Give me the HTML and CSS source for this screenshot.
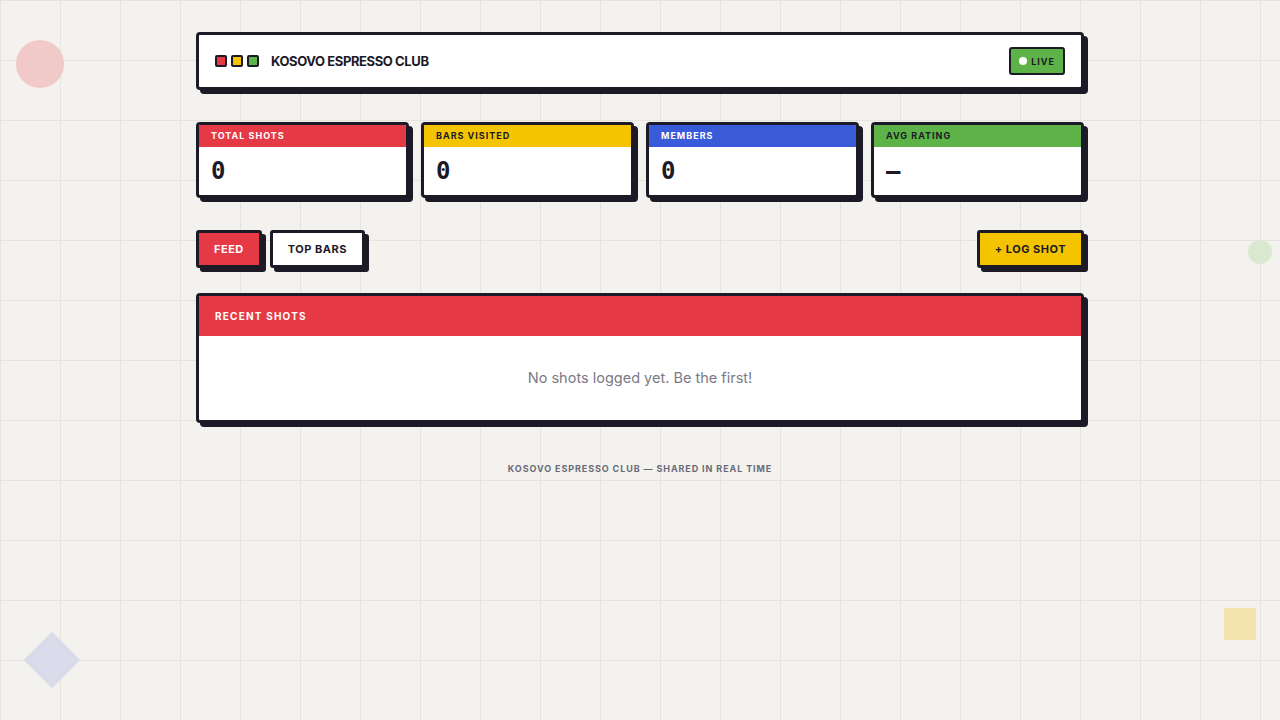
FILE: index.html
```html
<!DOCTYPE html>
<html lang="en">
<head>
    <meta charset="UTF-8">
    <meta name="viewport" content="width=device-width, initial-scale=1.0">
    <title>Kosovo Espresso Club</title>
    <link rel="stylesheet" href="styles.css">
</head>
<body>

    <div class="deco deco-circle-red"></div>
    <div class="deco deco-circle-green"></div>
    <div class="deco deco-square-yellow"></div>
    <div class="deco deco-diamond"></div>

    <div class="page">
        <header class="topbar">
            <div class="brand">
                <span class="dot red"></span>
                <span class="dot yellow"></span>
                <span class="dot green"></span>
                <span class="brand-name">KOSOVO ESPRESSO CLUB</span>
            </div>
            <div class="live-badge"><span class="live-dot"></span>LIVE</div>
        </header>

        <section class="stats">
            <div class="stat">
                <div class="stat-label red">TOTAL SHOTS</div>
                <div class="stat-value">0</div>
            </div>
            <div class="stat">
                <div class="stat-label yellow">BARS VISITED</div>
                <div class="stat-value">0</div>
            </div>
            <div class="stat">
                <div class="stat-label blue">MEMBERS</div>
                <div class="stat-value">0</div>
            </div>
            <div class="stat">
                <div class="stat-label green">AVG RATING</div>
                <div class="stat-value">—</div>
            </div>
        </section>

        <nav class="actions">
            <div class="tabs">
                <button class="btn btn-active">FEED</button>
                <button class="btn">TOP BARS</button>
            </div>
            <button class="btn btn-log">+ LOG SHOT</button>
        </nav>

        <section class="panel">
            <div class="panel-head">RECENT SHOTS</div>
            <div class="panel-body">No shots logged yet. Be the first!</div>
        </section>

        <footer class="footer">KOSOVO ESPRESSO CLUB — SHARED IN REAL TIME</footer>
    </div>

</body>
</html>
```

FILE: styles.css
```css
body {
    margin: 0;
    min-height: 720px;
    font-family: Inter, "Liberation Sans", sans-serif;
    color: #1c1a27;
    background-color: #f3f2ee;
    background-image:
        linear-gradient(#e6e4de 1px, transparent 1px),
        linear-gradient(90deg, #e6e4de 1px, transparent 1px);
    background-size: 60px 60px;
    overflow: hidden;
}

.page {
    width: 888px;
    margin: 0 auto;
    padding-top: 32px;
    position: relative;
}

/* decorations */
.deco {
    position: absolute;
}
.deco-circle-red {
    left: 16px;
    top: 40px;
    width: 48px;
    height: 48px;
    border-radius: 50%;
    background: #f2c9c9;
}
.deco-circle-green {
    left: 1248px;
    top: 240px;
    width: 24px;
    height: 24px;
    border-radius: 50%;
    background: #d8e9cf;
}
.deco-square-yellow {
    left: 1224px;
    top: 608px;
    width: 32px;
    height: 32px;
    background: #f3e4ae;
}
.deco-diamond {
    left: 32px;
    top: 640px;
    width: 40px;
    height: 40px;
    background: #d9dbea;
    transform: rotate(45deg);
}

/* header */
.topbar {
    display: flex;
    align-items: center;
    justify-content: space-between;
    height: 52px;
    padding: 0 16px;
    background: #fff;
    border: 3px solid #1c1a27;
    border-radius: 4px;
    box-shadow: 4px 4px 0 #1c1a27;
}
.brand {
    display: flex;
    align-items: center;
    gap: 4px;
}
.dot {
    width: 8px;
    height: 8px;
    border: 2px solid #1c1a27;
    border-radius: 2px;
}
.dot.red { background: #e63946; }
.dot.yellow { background: #f5c400; }
.dot.green { background: #5db347; }
.brand-name {
    margin-left: 8px;
    font-size: 13px;
    font-weight: 700;
    letter-spacing: -0.4px;
}
.live-badge {
    display: flex;
    align-items: center;
    gap: 4px;
    height: 24px;
    padding: 0 8px;
    background: #5db347;
    border: 2px solid #1c1a27;
    border-radius: 3px;
    font-size: 9px;
    font-weight: 700;
    letter-spacing: 1px;
}
.live-dot {
    width: 8px;
    height: 8px;
    border-radius: 50%;
    background: #fff;
}

/* stats */
.stats {
    display: grid;
    grid-template-columns: repeat(4, 1fr);
    gap: 12px;
    margin-top: 32px;
}
.stat {
    background: #fff;
    border: 3px solid #1c1a27;
    border-radius: 4px;
    box-shadow: 4px 4px 0 #1c1a27;
    overflow: hidden;
}
.stat-label {
    height: 22px;
    line-height: 22px;
    padding: 0 12px;
    font-size: 9px;
    font-weight: 700;
    letter-spacing: 1px;
    color: #fff;
}
.stat-label.red { background: #e63946; }
.stat-label.yellow { background: #f5c400; color: #1c1a27; }
.stat-label.blue { background: #3a5bd9; }
.stat-label.green { background: #5db347; color: #1c1a27; }
.stat-value {
    height: 48px;
    line-height: 48px;
    padding: 0 12px;
    font-family: "DejaVu Sans Mono", "Liberation Mono", monospace;
    font-size: 24px;
    font-weight: 700;
}

/* actions */
.actions {
    display: flex;
    justify-content: space-between;
    margin-top: 32px;
}
.tabs {
    display: flex;
    gap: 8px;
}
.btn {
    height: 38px;
    padding: 0 15px;
    background: #fff;
    border: 3px solid #1c1a27;
    border-radius: 3px;
    box-shadow: 4px 4px 0 #1c1a27;
    font-family: Inter, "Liberation Sans", sans-serif;
    font-size: 11px;
    font-weight: 700;
    letter-spacing: 0.5px;
    color: #1c1a27;
    cursor: pointer;
}
.btn-active {
    background: #e63946;
    color: #fff;
}
.btn-log {
    background: #f5c400;
}

/* panel */
.panel {
    margin-top: 25px;
    background: #fff;
    border: 3px solid #1c1a27;
    border-radius: 4px;
    box-shadow: 4px 4px 0 #1c1a27;
    overflow: hidden;
}
.panel-head {
    height: 40px;
    line-height: 40px;
    padding: 0 16px;
    background: #e63946;
    color: #fff;
    font-size: 10px;
    font-weight: 700;
    letter-spacing: 1.2px;
}
.panel-body {
    height: 84px;
    line-height: 84px;
    text-align: center;
    font-size: 14.5px;
    color: #7a7a85;
}

.footer {
    margin-top: 40px;
    text-align: center;
    font-size: 9px;
    font-weight: 700;
    letter-spacing: 0.9px;
    color: #6b6a7a;
}
```
